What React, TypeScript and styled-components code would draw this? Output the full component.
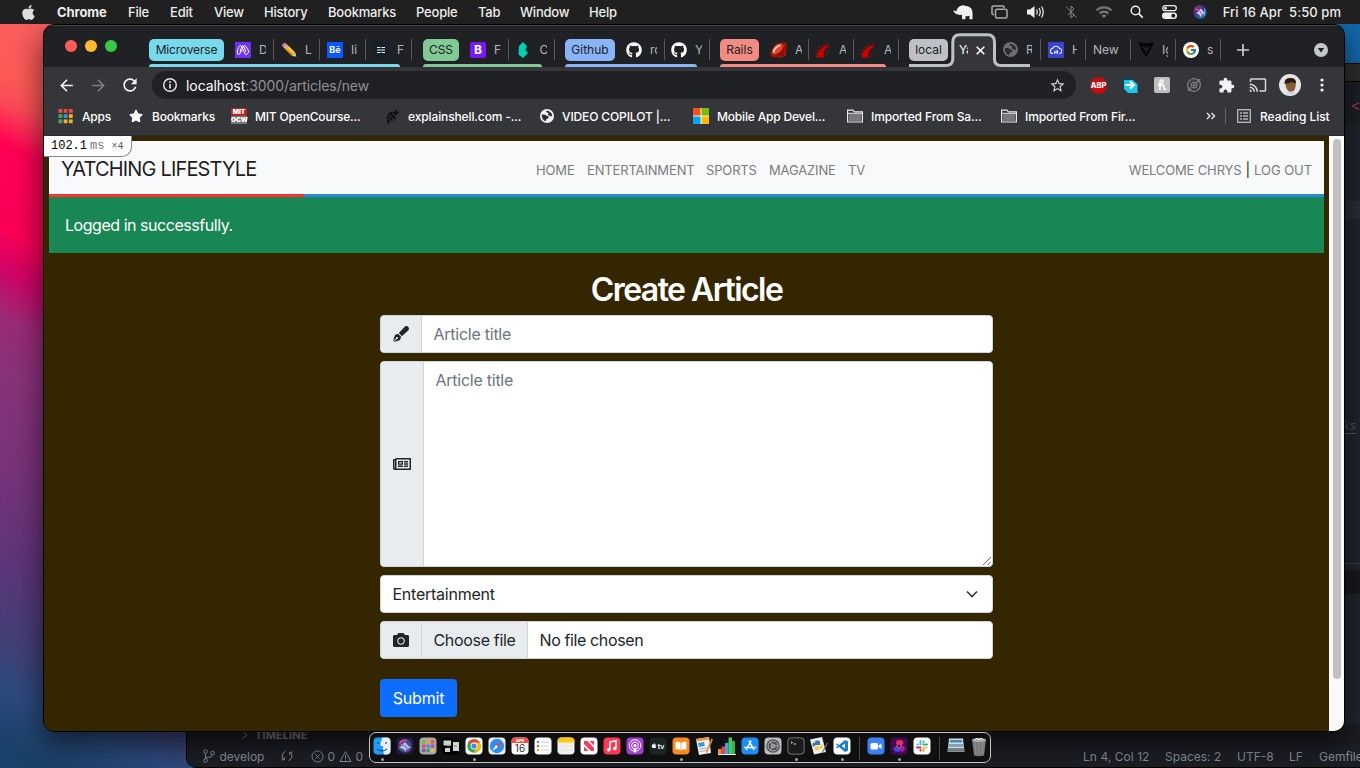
import React from "react";
import styled, { createGlobalStyle, css } from "styled-components";
import { FaApple, FaGithub, FaPenFancy, FaRegNewspaper, FaCamera, FaStar } from "react-icons/fa";
import { MdBluetoothDisabled, MdCast, MdExtension, MdArrowBack, MdArrowForward, MdRefresh, MdStarBorder, MdWifi } from "react-icons/md";
import { FcGoogle } from "react-icons/fc";

const Global = createGlobalStyle`
  * { box-sizing: border-box; }
  body { margin: 0; font-family: Inter, "Liberation Sans", sans-serif; overflow: hidden; }
  svg { display: block; flex: none; }
`;

/* ---------- desktop ---------- */
const Desktop = styled.div`
  position: relative;
  width: 1360px;
  height: 768px;
  overflow: hidden;
  background:
    linear-gradient(205deg, #f8646a 0, #fc5a56 19%, #fb4a55 22%, #ff0055 27%, #fa0057 37%, #cc0668 42%, #9c2a77 47%, #8a327b 53%, #75337a 66%, #5f3579 75%, #443f76 84%, #2b4a7d 91%, #1a4169 97%) 0 0 / 190px 768px no-repeat,
    #1368ad;
`;

const MenuBar = styled.header`
  position: relative;
  display: flex;
  align-items: center;
  height: 24px;
  padding-left: 20px;
  background: #202020;
  color: #ececec;
  font-size: 13px;
  white-space: nowrap;
`;
const MenuItem = styled.span<{ $w: number; $bold?: boolean }>`
  flex: none;
  width: ${(p) => p.$w}px;
  font-weight: ${(p) => (p.$bold ? 700 : 500)};
  letter-spacing: ${(p) => (p.$bold ? -0.1 : -0.2)}px;
`;
const StatusIcons = styled.div`
  display: flex;
  align-items: center;
  margin-left: auto;
  margin-right: 19px;
`;
const IconSlot = styled.span<{ $w: number }>`
  flex: none;
  width: ${(p) => p.$w}px;
  display: flex;
  justify-content: center;
`;
const Clock = styled.span`
  width: 126px;
  padding-bottom: 1px;
  font-weight: 500;
  letter-spacing: 0.07px;
  white-space: pre;
  text-align: right;
`;

/* ---------- editor window behind ---------- */
const Editor = styled.section`
  position: absolute;
  left: 186px;
  top: 63px;
  width: 1200px;
  height: 705px;
  display: flex;
  flex-direction: column;
  border: 1px solid #000;
  border-radius: 10px;
  background: #21252d;
  overflow: hidden;
  color: #8b909c;
`;
const EditorTitle = styled.div`
  height: 18px;
  background: #2d2d2e;
  border-bottom: 1px solid #050505;
`;
const EditorTabs = styled.div`
  display: flex;
  justify-content: flex-end;
  align-items: center;
  height: 43px;
  padding: 7px 17px 0 0;
  background: #1c1f26;
  color: #b03a44;
  font: 14px "Liberation Mono", monospace;
`;
const EditorBody = styled.div`
  flex: 1;
  display: flex;
  flex-direction: column;
  align-items: flex-end;
`;
const EditorBand = styled.div<{ $h: number; $c?: string; $line?: boolean }>`
  width: 100%;
  height: ${(p) => p.$h}px;
  background: ${(p) => p.$c ?? "transparent"};
  ${(p) => p.$line && css`border-top: 1px solid #3b3f47;`}
`;
const EditorWord = styled.span`
  margin-right: 29px;
  padding: 6px 0 1px;
  color: #4c525d;
  border-bottom: 1px solid #555a64;
  font: italic 12px/12px "DejaVu Sans", sans-serif;
`;
const Timeline = styled.div`
  display: flex;
  align-items: center;
  gap: 7px;
  width: 100%;
  height: 21px;
  padding: 0 0 0 54px;
  background: #1b1d21;
  color: #777979;
  font-size: 11px;
  font-weight: 700;
  letter-spacing: 0.1px;
`;
const StatusBar = styled.div`
  display: flex;
  align-items: center;
  height: 22px;
  padding-left: 15px;
  background: #1c1f25;
  font-size: 12px;
  white-space: nowrap;
`;
const StatusText = styled.span<{ $w: number; $ls?: number }>`
  flex: none;
  width: ${(p) => p.$w}px;
  letter-spacing: ${(p) => p.$ls ?? 0}px;
`;

/* ---------- browser ---------- */
const BrowserShadow = styled.div`
  position: absolute;
  left: 43px;
  top: 24px;
  width: 1302px;
  height: 708px;
  border-radius: 11px;
  box-shadow: 0 12px 30px rgba(0, 0, 0, 0.62);
`;
const Browser = styled.main`
  position: absolute;
  left: 43px;
  top: 24px;
  width: 1302px;
  height: 708px;
  display: flex;
  flex-direction: column;
  border: 1px solid #000;
  border-radius: 11px;
  overflow: hidden;
  background: #35363a;
`;
const TabStrip = styled.div`
  display: flex;
  height: 42px;
  padding-left: 21px;
  background: #202124;
  border-top: 1px solid #45464a;
`;
const Lights = styled.div`
  display: flex;
  flex: none;
  gap: 8px;
  width: 84px;
  padding-top: 14px;
`;
const Light = styled.i<{ $c: string }>`
  width: 12px;
  height: 12px;
  border-radius: 50%;
  background: ${(p) => p.$c};
`;
const Group = styled.div<{ $w: number }>`
  display: flex;
  flex-direction: column;
  flex: none;
  width: ${(p) => p.$w}px;
  padding-top: 13px;
`;
const GroupRow = styled.div`
  display: flex;
  height: 22px;
  padding-right: 4px;
`;
const Chip = styled.span<{ $w: number; $c: string; $ls?: number }>`
  flex: none;
  width: ${(p) => p.$w}px;
  margin-right: 11px;
  border-radius: 5px;
  background: ${(p) => p.$c};
  color: #202124;
  font-size: 12px;
  line-height: 22px;
  text-align: center;
  letter-spacing: ${(p) => p.$ls ?? 0}px;
`;
const Underline = styled.div<{ $c: string }>`
  margin: 3px 23px 0 0;
  height: 3px;
  border-radius: 3px 3px 0 0;
  background: ${(p) => p.$c};
`;
const Tab = styled.div`
  flex: 1;
  display: flex;
  min-width: 0;
`;
const TabInner = styled.div`
  display: flex;
  align-items: center;
  gap: 8px;
  width: 39px;
  height: 21px;
  border-right: 1px solid #55575b;
`;
const TabLabel = styled.span<{ $w?: number; $active?: boolean }>`
  flex: none;
  width: ${(p) => p.$w ?? 7}px;
  overflow: hidden;
  white-space: nowrap;
  font-size: 12px;
  line-height: 20px;
  color: ${(p) => (p.$active ? "#fff" : "#b4b7bb")};
`;
const ActiveTab = styled.div`
  position: relative;
  display: flex;
  align-items: center;
  flex: none;
  gap: 8px;
  width: 45px;
  padding: 7px 0 0 8px;
  > * { position: relative; z-index: 1; }
`;
const ActiveOutline = styled.svg`
  && {
    position: absolute;
    z-index: 0;
    left: 0;
    top: 7px;
  }
`;
const LooseTabs = styled.div`
  display: flex;
  flex: none;
  padding-top: 13px;
`;
const LooseTab = styled.div`
  display: flex;
  align-items: center;
  gap: 8px;
  width: 45px;
  height: 21px;
  padding-left: 7px;
  border-right: 1px solid #55575b;
`;
const StripButton = styled.div<{ $left: number }>`
  display: flex;
  align-items: center;
  flex: none;
  height: 48px;
  margin-left: ${(p) => p.$left}px;
`;
const Toolbar = styled.div`
  display: flex;
  align-items: center;
  height: 36px;
  padding-left: 6px;
`;
const Slot = styled.span`
  flex: none;
  width: 32px;
  display: flex;
  justify-content: center;
  color: #f1f3f4;
`;
const OmniBox = styled.div`
  display: flex;
  align-items: center;
  flex: none;
  width: 924px;
  height: 28px;
  margin: 0 6px;
  padding: 0 10px;
  border-radius: 14px;
  background: #202124;
  color: #8f9296;
  font-size: 14px;
  letter-spacing: -0.07px;
`;
const Url = styled.span`
  flex: 1;
  padding-left: 8px;
  b { color: #fff; font-weight: 400; }
`;
const Bookmarks = styled.nav`
  display: flex;
  align-items: center;
  height: 33px;
  padding: 0 0 6px 14px;
  border-bottom: 1px solid #2a2b2e;
  color: #fff;
  font-size: 12px;
  font-weight: 500;
  white-space: nowrap;
`;
const Bookmark = styled.span<{ $w: number; $gap?: number; $ls?: number }>`
  display: flex;
  align-items: center;
  flex: none;
  gap: ${(p) => p.$gap ?? 8}px;
  width: ${(p) => p.$w}px;
  letter-spacing: ${(p) => p.$ls ?? -0.18}px;
`;
const BookmarkDivider = styled.i`
  flex: none;
  width: 1px;
  height: 16px;
  margin: 0 11px 0 9px;
  background: #65676b;
`;
const MitBadge = styled.span`
  display: flex;
  flex-direction: column;
  flex: none;
  width: 16px;
  height: 16px;
  font: 900 6.500px/8px Inter, sans-serif;
  letter-spacing: -0.1px;
  text-align: center;
  color: #fff;
`;
const MitHalf = styled.span<{ $c: string }>`
  height: 8px;
  background: ${(p) => p.$c};
`;
const Square = styled.span<{ $c: string; $fs?: number; $r?: number }>`
  display: flex;
  align-items: center;
  justify-content: center;
  flex: none;
  width: 16px;
  height: 16px;
  border-radius: ${(p) => p.$r ?? 0}px;
  background: ${(p) => p.$c};
  color: #fff;
  font-size: ${(p) => p.$fs ?? 9}px;
  font-weight: 700;
  letter-spacing: 0;
`;

/* ---------- page ---------- */
const Viewport = styled.div`
  position: relative;
  display: flex;
  flex: 1;
  min-height: 0;
`;
const Page = styled.div`
  flex: 1;
  padding: 5px;
  background: #332600;
`;
const ScrollTrack = styled.div`
  width: 15px;
  padding: 3px 3px 0 4px;
  background: #fafafa;
`;
const ScrollThumb = styled.div`
  width: 8px;
  height: 540px;
  border-radius: 4px;
  background: #c1c1c1;
`;
const Profiler = styled.div`
  position: absolute;
  left: 0;
  top: 0;
  width: 88px;
  height: 21px;
  padding: 3px 0 0 7px;
  border-right: 1px solid #888;
  border-bottom: 1px solid #888;
  border-radius: 0 0 10px 0;
  background: #fff;
  color: #000;
  font: 12px/14px "Liberation Mono", monospace;
  white-space: nowrap;
  span { color: #777; margin-left: 3px; }
  small { color: #555; font-size: 10px; margin-left: 7px; }
`;
const NavBar = styled.nav`
  display: flex;
  align-items: center;
  height: 53px;
  padding: 4px 12px 0;
  background: #f8f9fa;
`;
const Brand = styled.span`
  width: 475px;
  padding-bottom: 1px;
  color: rgba(0, 0, 0, 0.9);
  font-size: 20px;
  letter-spacing: -0.84px;
`;
const NavLink = styled.span<{ $w?: number; $ls?: number }>`
  width: ${(p) => (p.$w ? p.$w + "px" : "auto")};
  padding-top: 1px;
  color: #7b7c7d;
  font-size: 13px;
  line-height: 16px;
  letter-spacing: ${(p) => p.$ls ?? -0.15}px;
  white-space: nowrap;
`;
const Account = styled.div`
  display: flex;
  align-items: center;
  gap: 4px;
  margin-left: auto;
  color: #212529;
  font-size: 14px;
  line-height: 18px;
`;
const Rule = styled.div`
  height: 3px;
  background: linear-gradient(90deg, #ff3130 0 20%, #2f86d6 20%);
`;
const Alert = styled.div`
  height: 56px;
  padding: 16px;
  background: #198754;
  color: #fff;
  font-size: 16px;
  line-height: 24px;
  letter-spacing: -0.46px;
`;
const Form = styled.form`
  display: flex;
  flex-direction: column;
  align-items: flex-start;
  gap: 8px;
  width: 613px;
  margin: 16px auto 0 331px;
  font-size: 16px;
  color: #212529;
`;
const Title = styled.h2`
  align-self: center;
  margin: 0;
  padding-top: 4px;
  color: #fff;
  font-size: 32px;
  font-weight: 600;
  line-height: 34px;
  letter-spacing: -1.55px;
`;
const Field = styled.div<{ $h: number }>`
  position: relative;
  display: flex;
  width: 100%;
  height: ${(p) => p.$h}px;
  border: 1px solid #ced4da;
  border-radius: 4px;
  background: #fff;
  overflow: hidden;
`;
const Addon = styled.span<{ $w: number }>`
  display: flex;
  align-items: center;
  justify-content: center;
  flex: none;
  width: ${(p) => p.$w}px;
  border-right: 1px solid #ced4da;
  background: #e9ecef;
  letter-spacing: -0.33px;
`;
const FieldText = styled.span<{ $muted?: boolean; $ls?: number }>`
  flex: 1;
  padding: 6px 11.500px;
  color: ${(p) => (p.$muted ? "#6c757d" : "#212529")};
  line-height: 24px;
  letter-spacing: ${(p) => p.$ls ?? -0.25}px;
`;
const Chevron = styled.svg`
  margin: 10px 12px 0 0;
`;
const Grip = styled.svg`
  position: absolute;
  right: 1px;
  bottom: 1px;
`;
const Submit = styled.button`
  width: 77px;
  height: 38px;
  margin-top: 12px;
  padding: 0;
  border: 0;
  border-radius: 4px;
  background: #0d6efd;
  color: #fff;
  font: 400 16px Inter, sans-serif;
  letter-spacing: -0.15px;
`;

/* ---------- dock ---------- */
const Dock = styled.footer`
  position: absolute;
  left: 369px;
  top: 732px;
  width: 622px;
  height: 31px;
  display: flex;
  border: 1px solid #c4c4c4;
  border-radius: 7px;
  background: #101011;
`;
const DockItem = styled.span`
  display: flex;
  flex-direction: column;
  align-items: center;
  flex: none;
  gap: 3px;
  width: 23px;
  padding: 4px 0 0 1px;
`;
const Running = styled.i`
  width: 3px;
  height: 3px;
  border-radius: 50%;
  background: #a5a5a5;
`;
const DockDivider = styled.i`
  flex: none;
  width: 1px;
  height: 23px;
  margin: 4px 4px 0 6px;
  background: #4a4a4a;
`;

/* ---------- small drawings ---------- */
const Globe = ({ c, s = 14 }: { c: string; s?: number }) => (
  <svg width={s} height={s} viewBox="0 0 14 14">
    <circle cx="7" cy="7" r="7" fill={c} />
    <path d="M1.800 5.500h2.500c1.500 0 1.800 1.400 3 1.600 1.500.2 2 .9 1 2-.8.8-2.300.5-2.600 3.100C3.500 12 1.400 9 1.800 5.500zM6.500 1.800c-.8 1.200 0 2 1.300 2 1.200 0 .8 1.300 0 1.900.3.700 1 .8 1.700.8 1 0 1.300 1.200 2.700.8C12.300 4.300 10 1.800 6.500 1.800z" fill="#2c2d30" />
  </svg>
);
const Folder = () => (
  <svg width="16" height="14" viewBox="0 0 16 14">
    <path d="M.6 13V1.200h5.200l1.600 1.700h8V13z" fill="none" stroke="#e8eaed" strokeWidth="1.2" />
    <path d="M2 5h12v7H2z" fill="#77797c" /><path d="M1 4.300h14" stroke="#e8eaed" />
  </svg>
);
const Rail = () => (
  <svg width="16" height="16" viewBox="0 0 16 16">
    <path d="M1.500 15.500C2 11 5 6 9.500 4.200c2.500-1 4.300-.9 5.800-.2-2.500.6-5 2.300-6 4.700-.9 2.200-.8 4.500-.3 6.800z" fill="#c80000" />
    <path d="M.5 11.500l1.700.7M2.300 8l1.500 1M4.700 4.800l1.100 1.400M8.500 2.200l.5 1.500M12.500 1.500v1.600M11.500 8.500l1.200-.5M10.800 11.500h1.300M11 14h1" stroke="#c80000" strokeWidth="1.200" />
  </svg>
);
const Ruby = () => (
  <svg width="17" height="16" viewBox="0 0 17 16">
    <path d="M6 2L12 .5l4.500.5L16 13.500l-5 2-9-.5L.5 11z" fill="#b11401" />
    <ellipse cx="7.500" cy="6.800" rx="6.500" ry="3.800" transform="rotate(-42 7.500 7)" fill="#e8452f" />
    <path d="M4 10.500C3 8.500 7 3.500 10.500 3.200" fill="none" stroke="#ffe3dd" strokeWidth="1.500" />
    <path d="M16 3L13.500 14 5 14.500l8-7z" fill="#8a1002" />
  </svg>
);
const Pencil = () => (
  <svg width="16" height="16" viewBox="0 0 16 16">
    <path d="M.8 3.800Q1.500 1 4.300.8L6 2.500 2.800 5.700z" fill="#e4788a" />
    <path d="M2.600 5.500L5.800 2.300l1.400 1.300L4 6.900z" fill="#b9c4cc" />
    <path d="M4 6.900l3.200-3.300 7 6.700-3.300 3.500z" fill="#f8c22e" />
    <path d="M5 7.800l1-1 7 6.500-1 .5z" fill="#e08b1c" />
    <path d="M10.900 13.800l3.300-3.500L15.600 15z" fill="#e9c9a0" /><path d="M14 14.600l1.300-1.100.5 1.900z" fill="#333" />
  </svg>
);
const Elephant = () => (
  <svg width="20" height="16" viewBox="0 0 20 16">
    <path d="M.2 6.200L3.200 7.200C4.500 3 7.500.8 11 1.200l1.500.9c4 0 6.800 2.400 7 6.400v6.800h-3v-3.500c-1 .5-2.700.6-4 .3v3.200H9v-4.800c-1 .6-2.500.8-3.600 0C3.500 10.500.8 9 .2 6.200z" fill="#f1f1f1" />
  </svg>
);
const Siri = () => (
  <svg width="14" height="14" viewBox="0 0 16 16">
    <defs><linearGradient id="siri" x1="0" y1="0" x2="0.600" y2="1"><stop offset="0" stopColor="#b13a8c" /><stop offset=".5" stopColor="#3f2f80" /><stop offset="1" stopColor="#2078c0" /></linearGradient></defs>
    <circle cx="8" cy="8" r="7.700" fill="url(#siri)" />
    <path d="M3 9.500c2.500-1 4-3.500 6-5.500 2 1.500 3 4 4.500 6-2.500-.5-3.500 1-5 4-.5-2.500-2-4-5.500-4.500z" fill="#d9f4ff" opacity=".85" />
    <path d="M2.500 5c3.500-.5 6 2 8 6" stroke="#ff4f9a" fill="none" strokeWidth="1.500" />
    <path d="M13 4q1.500 4-.5 8" stroke="#35c8e8" fill="none" strokeWidth="1.200" />
  </svg>
);
const Recycle = ({ c }: { c: string }) => (
  <svg width="16" height="16" viewBox="0 0 16 16" fill="none" stroke={c} strokeWidth="1.400">
    <path d="M4 13A6.300 6.300 0 0 1 5.500 2.300M12 3a6.300 6.300 0 0 1-1.500 10.700M1.500 13.300H4.500v-3M14.500 2.700h-3v3M6 2q3-1 5 .500M10 14q-3 1-5-.500" /><circle cx="8" cy="8" r="2.800" /><circle cx="8" cy="8" r=".7" />
  </svg>
);

const Tile = ({ bg, children }: { bg: string; children?: React.ReactNode }) => (
  <svg width="18" height="18" viewBox="0 0 18 18"><rect x=".5" y=".5" width="17" height="17" rx="4" fill={bg} />{children}</svg>
);
const slack = ["#36c5f0", "#2eb67d", "#ecb22e", "#e01e5a"];
const launch = ["#6abf4b", "#f0a030", "#e9574f", "#e14d43", "#4b8df0", "#a04fc0", "#7a56c9", "#4a9f57", "#f2bd35"];

type DockApp = { run?: boolean; icon: React.ReactNode };
const dockApps: DockApp[] = [
  { run: true, icon: <Tile bg="#1f9cf5"><path d="M9.500.5c-1.500 3-2 6-2 8.500H10c0 3 .3 6 1 8.500h2.500a4 4 0 0 0 4-4v-9a4 4 0 0 0-4-4z" fill="#e8edf3" /><path d="M5 5v2M13 5v2M4 12c3 2.500 7 2.500 10 0" stroke="#1b2b45" fill="none" /></Tile> },
  { icon: <Tile bg="#251b42"><circle cx="9" cy="9" r="6.800" fill="#57408a" /><path d="M2.500 11c2.500-.5 4-4.500 6.500-6 2 1.500 3.500 5 6.500 6-4 0-5 1-6 4-1.500-3-3.500-4-7-4z" fill="#7fd8ea" /><path d="M3.500 6.500Q6 2 11 3.500M4.500 8c3-.5 6 2 8 5.500" stroke="#f04f9f" fill="none" strokeWidth="1.300" /></Tile> },
  { icon: <Tile bg="#a9a9ab">{launch.map((c, i) => <rect key={i} x={3 + (i % 3) * 4.4} y={3 + Math.floor(i / 3) * 4.4} width="3.400" height="3.400" rx=".8" fill={c} />)}</Tile> },
  { icon: <Tile bg="#000"><path d="M1.500 3.500h7.500v5H1.500zM11 5h6v9h-6zM3 11h5v4H3z" fill="#cfd3d1" /><path d="M5 8.500h3M12 9h3" stroke="#51d05c" strokeWidth="1.500" /></Tile> },
  { run: true, icon: <Tile bg="#fff"><circle cx="9" cy="9" r="6.800" fill="#2da94f" /><path d="M9 9L3.100 5.600A6.800 6.800 0 0 1 14.900 5.600z" fill="#ea4335" /><path d="M9 9h6.700A6.800 6.800 0 0 1 8.700 15.800L12 10z" fill="#fbbc05" /><path d="M9 5.600h5.900a6.800 6.800 0 0 1 .5 5.600L12 10z" fill="#fbbc05" /><circle cx="9" cy="9" r="3.400" fill="#fff" /><circle cx="9" cy="9" r="2.600" fill="#4285f4" /></Tile> },
  { icon: <Tile bg="#e9edf0"><circle cx="9" cy="9" r="7.200" fill="#2f8df0" /><path d="M14 4L10 10 8 8z" fill="#f0443a" /><path d="M4 14l4-6 2 2z" fill="#fff" /></Tile> },
  { icon: <Tile bg="#fff"><path d="M.5 6V4.500a4 4 0 0 1 4-4h9a4 4 0 0 1 4 4V6z" fill="#ee4c46" /><text x="9" y="4.800" fontSize="4" fill="#fff" textAnchor="middle" fontWeight="700">APR</text><text x="9" y="14.800" fontSize="10" fill="#333" textAnchor="middle">16</text></Tile> },
  { icon: <Tile bg="#fff"><path d="M7 5h8M7 9h8M7 13h8" stroke="#ccc" /><circle cx="4" cy="5" r="1.200" fill="#2c8cf4" /><circle cx="4" cy="9" r="1.200" fill="#f0443a" /><circle cx="4" cy="13" r="1.200" fill="#f59b23" /></Tile> },
  { icon: <Tile bg="#f1f0ec"><path d="M.5 5.500v-1a4 4 0 0 1 4-4h9a4 4 0 0 1 4 4v1z" fill="#fbc715" /><path d="M2 9h14M2 13h14" stroke="#ddd" strokeWidth=".6" /></Tile> },
  { icon: <Tile bg="#fff"><path d="M4 4h3.500l6.500 7v3h-3L4 7zM4 9.500L8.500 14H4zM9.500 4H14v4.500z" fill="#f43d5a" /></Tile> },
  { icon: <Tile bg="#fb3a55"><path d="M7 12.500V5l6-1.300v7.500" stroke="#fff" strokeWidth="1.500" fill="none" /><circle cx="5.800" cy="12.800" r="1.800" fill="#fff" /><circle cx="11.800" cy="11.500" r="1.800" fill="#fff" /></Tile> },
  { icon: <Tile bg="#a13fd0"><circle cx="9" cy="8.500" r="5.800" fill="none" stroke="#fff" /><circle cx="9" cy="8.500" r="3.400" fill="none" stroke="#fff" /><circle cx="9" cy="8.500" r="1.500" fill="#fff" /><path d="M7.500 11h3l-.6 4.500H8.100z" fill="#fff" /></Tile> },
  { icon: <Tile bg="#1c2425"><FaApple x="2" y="5.500" size={6} color="#fff" /><text x="12" y="11.500" fontSize="7" fill="#fff" textAnchor="middle" fontWeight="600">tv</text></Tile> },
  { run: true, icon: <Tile bg="#fb8b1c"><path d="M9 6C7 4.500 5 4.700 3.500 5v7.500c2-.4 4-.2 5.500.8 1.500-1 3.500-1.200 5.500-.8V5C13 4.700 11 4.500 9 6z" fill="#fff" /><path d="M9 6v7" stroke="#fb8b1c" strokeWidth=".7" /></Tile> },
  { icon: <svg width="18" height="18" viewBox="0 0 18 18"><path d="M1 2L14 0l2 16-12 2z" fill="#f2f2f0" /><path d="M1 2L14 0l.4 2.500-13 2z" fill="#ef9430" /><path d="M3 6l6-1 .8 4-6 1z" fill="#3e95da" /><path d="M4.500 12l7-1M5 14.500l6-1" stroke="#aaa" /><path d="M16.500 1.500L11 14l-.3 2.500L12.500 15 18 2.500z" fill="#e48b2e" /></svg> },
  { icon: <svg width="18" height="18" viewBox="0 0 18 18"><path d="M0 12h3.500v5H0z" fill="#f58a33" /><path d="M3.500 9.500H7V17H3.500z" fill="#e54949" /><path d="M7 6h3.500v11H7z" fill="#3fa1f2" /><path d="M10.500.5H14V17h-3.500z" fill="#45c95a" /><path d="M14 4h3v13h-3z" fill="#37b34c" /><path d="M0 17.500h18" stroke="#eee" /></svg> },
  { icon: <Tile bg="#1c8ef5"><path d="M9.800 4.200L5.500 12.500M8.200 4.200l4.500 8.300M3.500 10.500h7M12.500 10.500h2" stroke="#fff" strokeWidth="1.500" strokeLinecap="round" /></Tile> },
  { icon: <Tile bg="#b9bcc0"><circle cx="9" cy="9" r="6.800" fill="#4b4d50" /><circle cx="9" cy="9" r="5" fill="none" stroke="#b2b4b7" /><circle cx="9" cy="9" r="2" fill="none" stroke="#b2b4b7" /><path d="M9 9L6 4.500M9 9h5M9 9l-3 4.500" stroke="#b2b4b7" /></Tile> },
  { run: true, icon: <Tile bg="#8c8e90"><rect x="1.300" y="1.300" width="15.400" height="15.400" rx="3.300" fill="#1b1b1c" /><path d="M4 4.500l1.500 1L4 6.500M6.500 7h2.500" stroke="#fff" fill="none" strokeWidth=".8" /></Tile> },
  { icon: <svg width="18" height="18" viewBox="0 0 18 18"><path d="M0 2.500L12 0l4 15-12 2.500z" fill="#eeeeea" /><path d="M5 5c0-2 5-2 5 0v3H6c-1 0-2 1-2 2-2 0-2-4 0-4.500h3" fill="#3d75a8" /><path d="M11.500 7c2 0 2 4 0 4.500L9 12c0 2-4 2-4 0V9.500h4.500C11 9.500 11.500 8 11.500 7z" fill="#f6cb3e" /><path d="M17.500 6L12 16" stroke="#777" strokeWidth="1.200" /></svg> },
  { run: true, icon: <Tile bg="#fff"><path d="M12 3l3 1.300v9.400L12 15 6 10l-2 1.500-1.200-.8L5 9 2.800 7.300 4 6.500 6 8zm0 3.500L8.700 9l3.300 2.500z" fill="#1f7fca" /></Tile> },
];
const dockExtras: DockApp[] = [
  { icon: <Tile bg="#3c80f6"><rect x="3.500" y="6" width="7.500" height="6.500" rx="1.500" fill="#fff" /><path d="M11.500 8.500l3-2v5.500l-3-2z" fill="#fff" /></Tile> },
  { run: true, icon: <Tile bg="#430a58"><path d="M9 9Q3 9 3.500 12.500 5 16 9.500 14.500 14 12.500 9 9z" fill="#4b3fe0" /><path d="M9 9Q4 6 7 3.500 11 1.500 13.500 5 13.500 8.500 9 9z" fill="#e82a54" /><path d="M9 9q5.500-1 6 2.500 0 3-4 4Q12.500 12 9 9z" fill="#a3238d" /><circle cx="9" cy="9" r="2.200" fill="#5a1068" stroke="#f05a90" /></Tile> },
  { icon: <Tile bg="#fff">{slack.map((c, i) => <g key={i} transform={`rotate(${i * 90} 9 9)`}><rect x="6.500" y="3" width="2" height="5.500" rx="1" fill={c} /><rect x="3.500" y="6.500" width="2.500" height="2" rx="1" fill={c} /></g>)}</Tile> },
];
const dockEnd: DockApp[] = [
  { icon: <svg width="18" height="18" viewBox="0 0 18 18"><path d="M2 1.500h14l1 10H1z" fill="#d8dee3" /><path d="M3 3h12l.5 2.500h-13z" fill="#4a87b8" /><path d="M2 7h14l.4 3H1.600z" fill="#7aa3bd" /><path d="M.5 11.500h17V15H.5z" fill="#8b9296" /><path d="M1 13h16" stroke="#5d6468" /></svg> },
  { icon: <svg width="18" height="20" viewBox="0 0 18 20"><path d="M2 2.500h14l-2 16q-5 1.500-10 0z" fill="#77797b" /><path d="M5 5l1 12M9 5v12M13 5l-1 12" stroke="#8c8e90" /><ellipse cx="9" cy="3" rx="7" ry="2" fill="#a9abab" /><path d="M5 3l2-2 2 2 2-2 2 2" stroke="#eee" fill="none" /></svg> },
];
const DockList = ({ apps }: { apps: DockApp[] }) => (
  <>{apps.map((a, i) => <DockItem key={i}>{a.icon}{a.run && <Running />}</DockItem>)}</>
);

const menus: [string, number][] = [
  ["File", 42], ["Edit", 44], ["View", 50], ["History", 64], ["Bookmarks", 88], ["People", 62], ["Tab", 42], ["Window", 69], ["Help", 40],
];
const appDots = ["#ee4a3f", "#ee4a3f", "#ee4a3f", "#46a65b", "#3c8cf0", "#f4b320", "#46a65b", "#f4b320", "#f4b320"];

type TabData = { icon: React.ReactNode; label: string };
const TabGroup = ({ w, chip, chipW, color, ls, tabs }: { w: number; chip: string; chipW: number; color: string; ls?: number; tabs: TabData[] }) => (
  <Group $w={w}>
    <GroupRow>
      <Chip $w={chipW} $c={color} $ls={ls}>{chip}</Chip>
      {tabs.map((t, i) => <Tab key={i}><TabInner>{t.icon}<TabLabel>{t.label}</TabLabel></TabInner></Tab>)}
    </GroupRow>
    <Underline $c={color} />
  </Group>
);

export default function App() {
  return (
    <>
      <Global />
      <Desktop>
        <Editor>
          <EditorTitle />
          <EditorTabs>&lt;&gt;</EditorTabs>
          <EditorBody>
            <EditorBand $h={76} />
            <EditorBand $h={18} $c="#292d36" />
            <EditorBand $h={195} />
            <EditorWord>ks</EditorWord>
            <EditorBand $h={129} />
            <EditorBand $h={7} $line />
            <EditorBand $h={24} $c="#17191d" />
          </EditorBody>
          <Timeline>
            <svg width="7" height="10" viewBox="0 0 7 10"><path d="M1 1l5 4-5 4" fill="none" stroke="#777979" /></svg>
            TIMELINE
          </Timeline>
          <StatusBar>
            <svg width="14" height="14" viewBox="0 0 14 14" fill="none" stroke="#8b909c"><circle cx="3.500" cy="2.500" r="1.800" /><circle cx="3.500" cy="11.500" r="1.800" /><circle cx="10.500" cy="4" r="1.800" /><path d="M3.500 4.300v5.400M10.500 6q0 2.500-7 2.500" /></svg>
            <StatusText $w={64}>&nbsp;develop</StatusText>
            <svg width="14" height="14" viewBox="0 0 14 14" fill="none" stroke="#8b909c"><path d="M4 10.800A4.800 4.800 0 0 1 5.500 2.400M10 3.200a4.800 4.800 0 0 1-1.500 8.400M1.500 10.800H4.300V8M12.500 3.200H9.700V6" /></svg>
            <StatusText $w={17} />
            <svg width="13" height="13" viewBox="0 0 13 13" fill="none" stroke="#8b909c"><circle cx="6.500" cy="6.500" r="5.500" /><path d="M4.500 4.500l4 4M8.500 4.500l-4 4" /></svg>
            <StatusText $w={15}>&nbsp;0</StatusText>
            <svg width="13" height="13" viewBox="0 0 13 13" fill="none" stroke="#8b909c"><path d="M6.500 1.500l5.500 10H1zM6.500 5v3.500M6.500 9.500v1" /></svg>
            <StatusText $w={731}>&nbsp;0</StatusText>
            <StatusText $w={82} $ls={0.05}>Ln 4, Col 12</StatusText>
            <StatusText $w={72}>Spaces: 2</StatusText>
            <StatusText $w={52}>UTF-8</StatusText>
            <StatusText $w={30}>LF</StatusText>
            <StatusText $w={50}>Gemfile</StatusText>
          </StatusBar>
        </Editor>

        <BrowserShadow />
        <MenuBar>
          <MenuItem $w={37}><FaApple size={17} color="#ddd" /></MenuItem>
          <MenuItem $w={71} $bold>Chrome</MenuItem>
          {menus.map(([t, w]) => <MenuItem key={t} $w={w}>{t}</MenuItem>)}
          <StatusIcons>
            <IconSlot $w={37}><Elephant /></IconSlot>
            <IconSlot $w={37}><svg width="17" height="14" viewBox="0 0 17 14" fill="none" stroke="#aaa" strokeWidth="1.500"><path d="M3 9.500H2A1 1 0 0 1 1 8.500V2a1 1 0 0 1 1-1h10a1 1 0 0 1 1 1v1" /><rect x="4.500" y="4.300" width="11.500" height="8.700" rx="1.500" /></svg></IconSlot>
            <IconSlot $w={36}><svg width="18" height="14" viewBox="0 0 18 14"><path d="M0 4.500h3L7.500 1v12L3 9.500H0z" fill="#eee" /><path d="M9.500 4.500q1.500 2.500 0 5M12 3q2.500 4 0 8M14.500 1.500q3.500 5.500 0 11" stroke="#eee" fill="none" strokeWidth="1.200" /></svg></IconSlot>
            <IconSlot $w={34}><svg width="12" height="14" viewBox="0 0 12 14" fill="none" stroke="#858585"><path d="M3 10l6-6L6 1v12l3-3-3-3M1 1.500l10.500 11" /></svg></IconSlot>
            <IconSlot $w={32}><MdWifi size={18} color="#777" /></IconSlot>
            <IconSlot $w={33}><svg width="14" height="14" viewBox="0 0 14 14"><circle cx="5.500" cy="5.500" r="4.300" fill="none" stroke="#eee" strokeWidth="1.500" /><path d="M8.700 8.700l4 4" stroke="#eee" strokeWidth="1.700" /></svg></IconSlot>
            <IconSlot $w={32}><svg width="15" height="14" viewBox="0 0 15 14"><rect x=".7" y=".7" width="13.600" height="5" rx="2.500" fill="none" stroke="#eee" strokeWidth="1.300" /><circle cx="3.500" cy="3.200" r="1.400" fill="#eee" /><rect x="0" y="7.500" width="15" height="6.500" rx="3.200" fill="#eee" /><circle cx="11.300" cy="10.700" r="2" fill="#202020" /></svg></IconSlot>
            <IconSlot $w={30}><Siri /></IconSlot>
            <Clock>{"Fri 16 Apr  5:50 pm"}</Clock>
          </StatusIcons>
        </MenuBar>

        <Browser>
          <TabStrip>
            <Lights><Light $c="#ff5c57" /><Light $c="#ffbb2e" /><Light $c="#38c945" /></Lights>
            <TabGroup w={274} chip="Microverse" chipW={75} color="#78d9ec" ls={-0.15} tabs={[
              { icon: <Square $c="#6d33f5"><svg width="14" height="12" viewBox="0 0 14 12" fill="none" stroke="#fff" strokeWidth="1"><path d="M1 8Q2.500 2 4 1.500T8.500 9Q9.500 11.500 11 10T13 8M1 8Q1.500 11.500 3.500 10T7 3Q8.500.5 10 2.500T13 8M4 8Q6 1 7 1.500T10 8" /></svg></Square>, label: "D" },
              { icon: <Pencil />, label: "L" },
              { icon: <Square $c="#0a57ff" $fs={9}>Bē</Square>, label: "Ii" },
              { icon: <Square $c="#15202b" $r={2}><svg width="8" height="8" viewBox="0 0 8 8" stroke="#eee" strokeWidth="1.200"><path d="M0 1.500h3.500M4.500 1.500H8M0 4h8M0 6.500h3.500M4.500 6.500H8" /></svg></Square>, label: "F" },
            ]} />
            <TabGroup w={142} chip="CSS" chipW={36} color="#81c995" ls={-0.1} tabs={[
              { icon: <Square $c="#7a18f5" $r={2} $fs={12}>B</Square>, label: "F" },
              { icon: <svg width="16" height="16" viewBox="0 0 16 16"><path d="M7 0l4 4.200L9.500 8l2.500 3-5 5-4.500-3.500L3 4z" fill="#00d1b2" /></svg>, label: "C" },
            ]} />
            <TabGroup w={155} chip="Github" chipW={50} color="#8ab4f8" tabs={[
              { icon: <FaGithub size={16} color="#fff" />, label: "ro" },
              { icon: <FaGithub size={16} color="#fff" />, label: "Y" },
            ]} />
            <TabGroup w={189} chip="Rails" chipW={39} color="#f28b82" tabs={[
              { icon: <Ruby />, label: "A" }, { icon: <Rail />, label: "A" }, { icon: <Rail />, label: "A" },
            ]} />
            <Group $w={42}>
              <GroupRow><Chip $w={39} $c="#bdc1c6">local</Chip></GroupRow>
            </Group>
            <ActiveTab>
              <ActiveOutline width="124" height="34" viewBox="0 0 124 34" overflow="visible">
                <path d="M-4 34Q2 32 2 26V9Q2 2 9 2H36Q43.500 2 43.500 9V26Q43.500 32 50 34Z" fill="#35363a" />
                <path d="M-42 32.500H-5Q1.800 32.500 1.800 26V9Q1.800 1.800 9 1.800H36.500Q43.500 1.800 43.500 9V26Q43.500 32.500 50 32.500H79" fill="none" stroke="#bdc1c6" strokeWidth="3" />
              </ActiveOutline>
              <TabLabel $w={9} $active>Ya</TabLabel>
              <svg width="9" height="9" viewBox="0 0 9 9"><path d="M.7.7l7.600 7.600M8.300.7L.7 8.300" stroke="#fff" strokeWidth="1.600" /></svg>
            </ActiveTab>
            <LooseTabs>
              <LooseTab><Globe c="#6b6d70" s={15} /><TabLabel $w={6}>R</TabLabel></LooseTab>
              <LooseTab><Square $c="#3a44d1"><svg width="12" height="10" viewBox="0 0 12 10" fill="none" stroke="#fff" strokeWidth="1.100"><path d="M3 8.500a2.500 2.500 0 0 1-.5-5 3.800 3.800 0 0 1 7 0 2.500 2.500 0 0 1-.2 5M4.500 8.500v-2M6 8.500v-3M7.500 8.500v-3" /></svg></Square><TabLabel $w={5}>H</TabLabel></LooseTab>
              <LooseTab><TabLabel $w={27}>New</TabLabel></LooseTab>
              <LooseTab><svg width="16" height="15" viewBox="0 0 16 15"><path d="M0 0l5 1h6l5-1-4 9-4 6-4-6z" fill="#060606" /><path d="M5 5l2 3M11 5L9 8M8 4v7" stroke="#333" /></svg><TabLabel $w={6}>Ig</TabLabel></LooseTab>
              <LooseTab><svg width="16" height="16" viewBox="0 0 16 16"><circle cx="8" cy="8" r="8" fill="#fff" /><FcGoogle x="2" y="2" size={12} /></svg><TabLabel>s</TabLabel></LooseTab>
            </LooseTabs>
            <StripButton $left={16}><svg width="12" height="12" viewBox="0 0 12 12"><path d="M6 0v12M0 6h12" stroke="#ccc" strokeWidth="1.700" /></svg></StripButton>
            <StripButton $left={65}><svg width="14" height="14" viewBox="0 0 14 14"><circle cx="7" cy="7" r="7" fill="#c3c6ca" /><path d="M3.800 5h6.400L7 9.500z" fill="#202124" /></svg></StripButton>
          </TabStrip>

          <Toolbar>
            <Slot><MdArrowBack size={19} /></Slot>
            <Slot><MdArrowForward size={19} color="#7d7f83" /></Slot>
            <Slot><MdRefresh size={20} /></Slot>
            <OmniBox>
              <svg width="16" height="16" viewBox="0 0 16 16"><circle cx="8" cy="8" r="6.300" fill="none" stroke="#e8eaed" strokeWidth="1.400" /><path d="M8 7v4.500M8 4.300V6" stroke="#e8eaed" strokeWidth="1.600" /></svg>
              <Url><b>localhost</b>:3000/articles/new</Url>
              <MdStarBorder size={17} color="#d0d2d5" />
            </OmniBox>
            <Slot><svg width="17" height="17" viewBox="0 0 17 17"><path d="M5 .5h7L16.500 5v7L12 16.500H5L.5 12V5z" fill="#cc0a0a" /><text x="8.500" y="11.300" textAnchor="middle" fill="#fff" fontSize="7.500" fontWeight="800">ABP</text></svg></Slot>
            <Slot><svg width="15" height="15" viewBox="0 0 15 15"><path d="M0 0h9v8H0z" fill="#07476b" /><path d="M1 2h9l4.500 4.500V15H5l-4-4z" fill="#1cc8e8" /><path d="M2.500 7h6M7 3.500L11 7l-4 3.500" stroke="#fff" strokeWidth="2.200" fill="none" /></svg></Slot>
            <Slot><Square $c="#bfbfbf" $r={2}><svg width="10" height="12" viewBox="0 0 10 12" fill="none" stroke="#fff" strokeWidth="1.500"><path d="M3 11V3q0-2 1.500-2T6 2.500q0 2-5 3.500M3 8q1-2.500 2.800-2T7 9q.2 2 2 1" /></svg></Square></Slot>
            <Slot><Recycle c="#77797c" /></Slot>
            <Slot><MdExtension size={17} /></Slot>
            <Slot><MdCast size={18} color="#d6d8db" /></Slot>
            <Slot><svg width="22" height="22" viewBox="0 0 22 22"><circle cx="11" cy="11" r="11" fill="#e5e6e8" /><path d="M6 8q1-4 5.500-4T17 8l-.5 5q-1 5-4.500 5T7 13z" fill="#8a5a34" /><path d="M5.500 10Q5 4 11 4t6 5q-3 0-5-1-2 2-5 1.500z" fill="#2a1a12" /><path d="M7.500 19.500l2-2.500q2 1.500 4 0l2 2.500q-4 2-8 0z" fill="#c9d3e6" /></svg></Slot>
            <Slot><svg width="4" height="14" viewBox="0 0 4 14" fill="#f1f3f4"><circle cx="2" cy="2" r="1.600" /><circle cx="2" cy="7" r="1.600" /><circle cx="2" cy="12" r="1.600" /></svg></Slot>
          </Toolbar>

          <Bookmarks>
            <Bookmark $w={71} $gap={9}><svg width="15" height="15" viewBox="0 0 15 15">{appDots.map((c, i) => <rect key={i} x={.5 + (i % 3) * 5.2} y={Math.floor(i / 3) * 5.2} width="3.800" height="3.800" fill={c} />)}</svg>Apps</Bookmark>
            <Bookmark $w={102} $gap={9}><FaStar size={14} />Bookmarks</Bookmark>
            <Bookmark $w={154}><MitBadge><MitHalf $c="#b5252c">MIT</MitHalf><MitHalf $c="#7b7873">OCW</MitHalf></MitBadge>MIT OpenCourse...</Bookmark>
            <Bookmark $w={154} $ls={-0.12}><svg width="15" height="15" viewBox="0 0 15 15"><path d="M3 5q2-3 6-2l3-3v3l2 1-3 2-1 5-4 1-3 3q-2-3-1-6z" fill="#111" /><path d="M4 6l5 5M7 4l4 4M3 9l3 3" stroke="#444" /></svg>explainshell.com -...</Bookmark>
            <Bookmark $w={154} $ls={-0.12}><IconSlot $w={15}><Globe c="#f1f3f4" /></IconSlot>VIDEO COPILOT |...</Bookmark>
            <Bookmark $w={154}><svg width="16" height="16" viewBox="0 0 16 16"><path d="M0 0h16v16H0z" fill="#fff4d9" /><path d="M0 0h7.500v7.500H0z" fill="#f4511e" /><path d="M8.500 0H16v7.500H8.500z" fill="#80bb0a" /><path d="M0 8.500h7.500V16H0z" fill="#05a6f0" /><path d="M8.500 8.500H16V16H8.500z" fill="#ffba08" /></svg>Mobile App Devel...</Bookmark>
            <Bookmark $w={154} $ls={-0.12}><Folder />Imported From Sa...</Bookmark>
            <Bookmark $w={205} $ls={-0.1}><Folder />Imported From Fir...</Bookmark>
            <svg width="10" height="8" viewBox="0 0 10 8" fill="none" stroke="#e8eaed" strokeWidth="1.400"><path d="M1 1l3 3-3 3M5.500 1l3 3-3 3" /></svg>
            <BookmarkDivider />
            <Bookmark $w={110} $gap={9} $ls={-0.05}><svg width="14" height="14" viewBox="0 0 14 14" fill="none" stroke="#bbb" strokeWidth="1.300"><rect x=".7" y=".7" width="12.600" height="12.600" /><path d="M3 4h2M6 4h5M3 7h2M6 7h5M3 10h2M6 10h5" /></svg>Reading List</Bookmark>
          </Bookmarks>

          <Viewport>
            <Page>
              <NavBar>
                <Brand>YATCHING LIFESTYLE</Brand>
                <NavLink $w={51}>HOME</NavLink>
                <NavLink $w={119}>ENTERTAINMENT</NavLink>
                <NavLink $w={63}>SPORTS</NavLink>
                <NavLink $w={79}>MAGAZINE</NavLink>
                <NavLink>TV</NavLink>
                <Account><NavLink>WELCOME CHRYS</NavLink>|<NavLink $ls={-0.05}>LOG OUT</NavLink></Account>
              </NavBar>
              <Rule />
              <Alert>Logged in successfully.</Alert>
              <Form>
                <Title>Create Article</Title>
                <Field $h={38}><Addon $w={41}><FaPenFancy size={16} /></Addon><FieldText $muted>Article title</FieldText></Field>
                <Field $h={206}>
                  <Addon $w={43}><FaRegNewspaper size={18} /></Addon><FieldText $muted>Article title</FieldText>
                  <Grip width="8" height="8" viewBox="0 0 8 8"><path d="M0 8L8 0M4.500 8L8 4.500" stroke="#555" strokeWidth=".9" /></Grip>
                </Field>
                <Field $h={38}><FieldText>Entertainment</FieldText><Chevron width="16" height="16" viewBox="0 0 16 16"><path d="M3 5.500l5 5 5-5" fill="none" stroke="#343a40" strokeWidth="1.700" /></Chevron></Field>
                <Field $h={38}><Addon $w={41}><FaCamera size={16} /></Addon><Addon $w={106}>Choose file</Addon><FieldText $ls={-0.38}>No file chosen</FieldText></Field>
                <Submit type="button">Submit</Submit>
              </Form>
            </Page>
            <ScrollTrack><ScrollThumb /></ScrollTrack>
            <Profiler>102.1<span>ms</span><small>×4</small></Profiler>
          </Viewport>
        </Browser>

        <Dock>
          <DockList apps={dockApps} />
          <DockDivider />
          <DockList apps={dockExtras} />
          <DockDivider />
          <DockList apps={dockEnd} />
        </Dock>
      </Desktop>
    </>
  );
}
